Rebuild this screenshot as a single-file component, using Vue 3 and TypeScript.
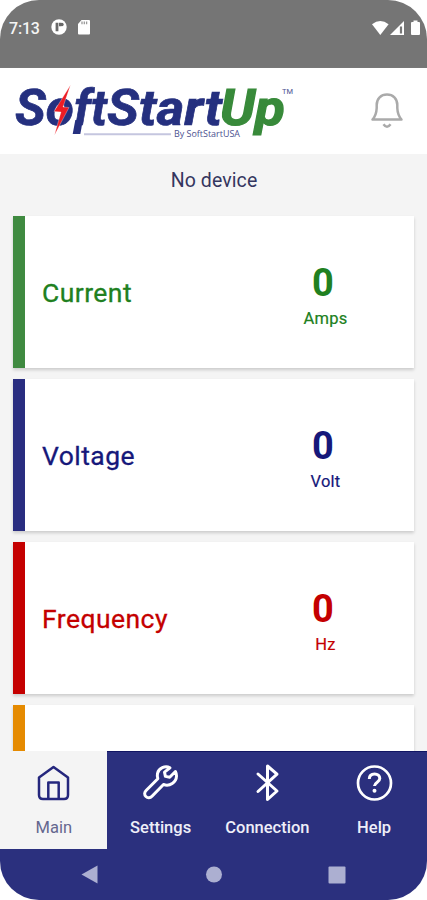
<script setup lang="ts">
interface Reading {
  label: string
  value: string
  unit: string
  tone: string
}

const readings: Reading[] = [
  { label: 'Current', value: '0', unit: 'Amps', tone: 'green' },
  { label: 'Voltage', value: '0', unit: 'Volt', tone: 'navy' },
  { label: 'Frequency', value: '0', unit: 'Hz', tone: 'red' },
  { label: '', value: '', unit: '', tone: 'orange' },
]
</script>

<template>
  <div class="phone">
    <div class="status">
      <span class="time">7:13</span>
      <svg class="status-left" width="40" height="18" viewBox="0 0 40 18">
        <circle cx="8" cy="9" r="7.700" fill="#fff" />
        <path d="M4.600 4.800h2.800v8.400H4.600zM8 4.800h2.300v3.400H8z" fill="#686868" />
        <circle cx="11" cy="6.500" r="1.700" fill="#686868" />
        <path d="M30.500 2H38q1 0 1 1v12.500q0 1-1 1H28q-1 0-1-1V6z" fill="#fff" />
        <path d="M31 3.600v2.600M33.300 3.600v2.600M35.600 3.600v2.600" stroke="#999" stroke-width="1.300" />
      </svg>
      <svg class="status-right" width="50" height="16" viewBox="0 0 50 16">
        <path d="M0 4.200Q8.300-2.400 16.600 4.200L8.300 15z" fill="#fff" />
        <path d="M18 15L32 1v14z" fill="#fff" />
        <path d="M29 6.500v7" stroke="#777" stroke-width="2.200" />
        <path d="M41.500 2V.5h4V2h1.500q1 0 1 1v11q0 1-1 1h-7q-1 0-1-1V3q0-1 1-1z" fill="#fff" />
      </svg>
    </div>

    <header class="header">
      <svg class="logo" width="285" height="62" viewBox="10 80 285 62">
        <text y="125" class="wordmark">
          <tspan x="15" textLength="59" lengthAdjust="spacingAndGlyphs" class="soft">So</tspan><tspan x="74" textLength="33" lengthAdjust="spacingAndGlyphs" class="soft">ft</tspan><tspan x="107" textLength="115" lengthAdjust="spacingAndGlyphs" class="soft">Start</tspan><tspan x="220" textLength="65" lengthAdjust="spacingAndGlyphs" class="up">Up</tspan>
        </text>
        <path d="M75.300 120h7.600l-2.600 14h-7.600z" fill="#25307f" />
        <path d="M70.500 85L54 111.500l7 .5L54.500 135 69 107.500l-6-.5z" fill="#ed1c24" stroke="#fff" stroke-width=".3" />
        <path d="M84 134.300h87" stroke="#c5c6df" stroke-width="2" />
        <text x="174" y="136.500" textLength="66" lengthAdjust="spacingAndGlyphs" class="by">By SoftStartUSA</text>
        <text x="282" y="94" textLength="11" lengthAdjust="spacingAndGlyphs" class="tm">TM</text>
      </svg>
      <svg class="bell" width="34" height="38" viewBox="0 0 34 38" fill="none" stroke="#aaa" stroke-width="2.500" stroke-linejoin="round">
        <path d="M2.500 27.500h29C28.300 24 27.500 20.500 27.300 16v-3C27.300 6.500 23 2.500 17 2.500S6.700 6.500 6.700 13v3C6.500 20.500 5.700 24 2.500 27.500z" />
        <path d="M13.500 32.200Q17 37.200 20.500 32.200" />
      </svg>
    </header>

    <main class="content">
      <p class="device">No device</p>
      <section v-for="r in readings" :key="r.tone" class="card" :class="r.tone">
        <h2 class="label">{{ r.label }}</h2>
        <div class="reading">
          <strong class="value">{{ r.value }}</strong>
          <span class="unit">{{ r.unit }}</span>
        </div>
      </section>
    </main>

    <nav class="tabs">
      <a class="tab active">
        <svg width="40" height="40" viewBox="0 0 40 40" fill="none" stroke="#25277d" stroke-width="2.500" stroke-linejoin="round">
          <path d="M20.500 4L35 14.500V32q0 4-4 4H10q-4 0-4-4V14.500z" />
          <path d="M15.300 36V19.500h10.400V36" />
        </svg>
        <span>Main</span>
      </a>
      <a class="tab">
        <svg width="40" height="40" viewBox="0 0 40 40" fill="none" stroke="#fff" stroke-width="3" stroke-linejoin="round">
          <path d="M30 4.800C25 2.300 18.700 5.200 17.500 10.500c-.4 2-.2 3.500.3 5.200L6.100 27.500c-1.900 1.900-1.900 4.400-.2 6s4.300 1.600 6.100-.3L23.500 21.500c6.200 2.200 12.800-2 13-8.500 0-1.800-.4-3.200-1.100-4.500l-5.700 5.700-4.300-.8-.9-4.300z" />
        </svg>
        <span>Settings</span>
      </a>
      <a class="tab">
        <svg width="40" height="40" viewBox="0 0 40 40" fill="none" stroke="#fff" stroke-width="3" stroke-linejoin="round" stroke-linecap="round">
          <path d="M11 11L30 28 20.500 36.500V3L30 11.200 11 28.500" />
        </svg>
        <span>Connection</span>
      </a>
      <a class="tab">
        <svg width="40" height="40" viewBox="0 0 40 40" fill="none" stroke="#fff" stroke-width="2.700">
          <circle cx="20.500" cy="20" r="16.500" />
          <path d="M15.300 16c0-3.300 2.300-5 5.300-5s5.200 1.800 5.200 4.600c0 3.700-5.300 3.500-5.300 7.500" stroke-width="3" />
          <circle cx="20.500" cy="27.800" r="2" fill="#fff" stroke="none" />
        </svg>
        <span>Help</span>
      </a>
    </nav>

    <footer class="system">
      <svg width="427" height="51" viewBox="0 0 427 51" fill="#acafd1">
        <path d="M81.500 25.500L97.500 16.500v18z" />
        <circle cx="214" cy="25.500" r="8" />
        <rect x="328.500" y="17.500" width="17" height="17" rx="1" />
      </svg>
    </footer>
  </div>
</template>

<style>
body {
  margin: 0;
  background: #fff;
}
</style>

<style scoped>
.phone {
  width: 427px;
  height: 900px;
  display: flex;
  flex-direction: column;
  overflow: hidden;
  border-radius: 39px;
  background: #f4f4f4;
  font-family: Roboto, sans-serif;
}

.status {
  flex: none;
  box-sizing: border-box;
  height: 68px;
  padding: 17px 5px 0 9px;
  display: flex;
  align-items: flex-start;
  background: #757575;
  border-bottom: 1px solid #777;
}

.time {
  width: 42px;
  font-size: 16px;
  line-height: 23px;
  font-weight: 500;
  letter-spacing: -0.2px;
  color: #f4f4f4;
}

.status-left {
  margin-top: 1px;
}

.status-right {
  margin: 3px 0 0 auto;
}

.header {
  flex: none;
  box-sizing: border-box;
  height: 86px;
  padding: 12px 23px 0 10px;
  display: flex;
  justify-content: space-between;
  align-items: flex-start;
  background: #fff;
}

.bell {
  margin-top: 12px;
}

.wordmark {
  font-size: 50px;
  font-weight: 700;
  font-style: italic;
}

.soft {
  fill: #25307f;
  stroke: #25307f;
  stroke-width: 0.7;
}

.up {
  fill: #388a3a;
  stroke: #388a3a;
  stroke-width: 1.2;
}

.by {
  font-family: "Open Sans", sans-serif;
  font-size: 8.500px;
  font-weight: 500;
  fill: #4b5190;
}

.tm {
  font-size: 7.500px;
  fill: #4b5190;
}

.content {
  flex: 1;
  min-height: 0;
  overflow: hidden;
  padding: 0 13px;
}

.device {
  margin: 0;
  height: 62px;
  padding: 15px 0 0 1px;
  box-sizing: border-box;
  text-align: center;
  font-size: 19.500px;
  line-height: 24px;
  letter-spacing: 0.1px;
  color: #34365f;
}

.card {
  box-sizing: border-box;
  height: 152px;
  margin-bottom: 11px;
  padding-left: 17px;
  display: flex;
  justify-content: space-between;
  border-left: 12px solid currentColor;
  background: #fff;
  box-shadow: 0 2px 3px rgba(0, 0, 0, 0.17);
}

.green {
  color: #208020;
  border-left-color: #3f8a40;
}

.navy {
  color: #16187a;
  border-left-color: #292d80;
}

.red {
  color: #c40000;
}

.orange {
  color: #e58a00;
}

.label {
  margin: 0;
  padding-top: 60px;
  font-size: 26.500px;
  line-height: 33px;
  font-weight: 400;
  letter-spacing: 0.450px;
  -webkit-text-stroke: 0.3px currentColor;
}

.reading {
  width: 177px;
  padding-top: 45px;
  display: flex;
  flex-direction: column;
  align-items: center;
}

.value {
  font-size: 38px;
  line-height: 44px;
  font-weight: 700;
  margin-right: 5px;
}

.unit {
  font-size: 16.500px;
  line-height: 20px;
  margin-top: 4px;
  letter-spacing: 0.2px;
  -webkit-text-stroke: 0.2px currentColor;
}

.tabs {
  flex: none;
  height: 98px;
  display: grid;
  grid-template-columns: repeat(4, 1fr);
  background: #2b307e;
}

.tab {
  display: flex;
  flex-direction: column;
  align-items: center;
  padding-top: 12px;
  box-shadow: inset 0 1px #111563;
  color: #eeeef8;
  font-size: 16.500px;
  line-height: 20px;
  font-weight: 500;
}

.tab span {
  margin: 15px 0 0 1px;
}

.active {
  background: #f4f4f4;
  color: #65678f;
  font-weight: 400;
  letter-spacing: 0.1px;
  box-shadow: none;
}

.system {
  flex: none;
  height: 51px;
  background: #2b307e;
}
</style>
